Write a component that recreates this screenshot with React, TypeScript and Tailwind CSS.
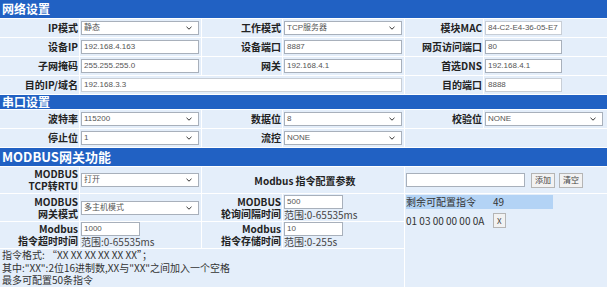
import React from "react";

const cell = "bg-[#e4eefa] flex items-center";
const label =
  "bg-[#e4eefa] flex items-center justify-end text-right font-bold text-[10px] leading-[12px] text-[#222] pr-px whitespace-nowrap";
const field =
  "h-[14px] border border-[#a8b0bb] bg-white text-[8px] leading-[12px] text-[#555] px-[2px] font-['Liberation_Sans','Noto_Sans_CJK_SC',sans-serif] flex items-center whitespace-nowrap overflow-hidden";

const Input = ({ value, w = "w-[118px]", disabled }: { value: string; w?: string; disabled?: boolean }) => (
  <div
    className={`${field} ${w} ${disabled ? "bg-[#eef1f5] border-[#c8ced6] text-[#9a9a9a]" : ""}`}
  >
    {value}
  </div>
);

const Select = ({ value, w = "w-[118px]" }: { value: string; w?: string }) => (
  <div className={`${field} ${w} justify-between`}>
    <span>{value}</span>
    <svg width="6" height="4" viewBox="0 0 6 4" className="mr-[4px]">
      <path d="M0.5 0.8 L3 3.2 L5.5 0.8" fill="none" stroke="#333" strokeWidth="1" />
    </svg>
  </div>
);

const Header = ({ title, h, size }: { title: string; h: string; size: string }) => (
  <div className={`bg-[#2161c3] text-white font-bold ${size} ${h} flex items-center pl-[2px]`}>{title}</div>
);

const Btn = ({ text }: { text: string }) => (
  <div className="h-[15px] px-[3px] border border-[#b5b5b5] bg-[#f2f2f2] text-[8px] text-[#444] flex items-center">
    {text}
  </div>
);

export default function App() {
  const cols = "grid grid-cols-[79px_121px_80px_121px_78px_123px] gap-px bg-white";
  return (
    <div className="w-[607px] h-[287px] overflow-hidden bg-white font-['Noto_Sans_CJK_SC','Noto_Sans',sans-serif] text-[#222]">
      <Header title="网络设置" h="h-[18px]" size="text-[12px]" />
      <div className={`${cols} auto-rows-[18px] pt-px`}>
        <div className={label}>IP模式</div>
        <div className={`${cell} pl-px`}><Select value="静态" /></div>
        <div className={label}>工作模式</div>
        <div className={`${cell} pl-px`}><Select value="TCP服务器" /></div>
        <div className={label}>模块MAC</div>
        <div className={`${cell} pl-px`}><Input value="84-C2-E4-36-05-E7" w="w-[77px]" disabled /></div>

        <div className={label}>设备IP</div>
        <div className={`${cell} pl-px`}><Input value="192.168.4.163" /></div>
        <div className={label}>设备端口</div>
        <div className={`${cell} pl-px`}><Input value="8887" /></div>
        <div className={label}>网页访问端口</div>
        <div className={`${cell} pl-px`}><Input value="80" w="w-[77px]" /></div>

        <div className={label}>子网掩码</div>
        <div className={`${cell} pl-px`}><Input value="255.255.255.0" /></div>
        <div className={label}>网关</div>
        <div className={`${cell} pl-px`}><Input value="192.168.4.1" /></div>
        <div className={label}>首选DNS</div>
        <div className={`${cell} pl-px`}><Input value="192.168.4.1" w="w-[77px]" /></div>

        <div className={label}>目的IP/域名</div>
        <div className={`${cell} pl-px col-span-3`}><Input value="192.168.3.3" w="w-[321px]" disabled /></div>
        <div className={label}>目的端口</div>
        <div className={`${cell} pl-px`}><Input value="8888" w="w-[77px]" disabled /></div>
      </div>

      <div className="pt-px">
        <Header title="串口设置" h="h-[14px]" size="text-[12px]" />
      </div>
      <div className={`${cols} auto-rows-[18px] pt-px`}>
        <div className={label}>波特率</div>
        <div className={`${cell} pl-px`}><Select value="115200" /></div>
        <div className={label}>数据位</div>
        <div className={`${cell} pl-px`}><Select value="8" /></div>
        <div className={label}>校验位</div>
        <div className={`${cell} pl-px`}><Select value="NONE" /></div>

        <div className={label}>停止位</div>
        <div className={`${cell} pl-px`}><Select value="1" /></div>
        <div className={label}>流控</div>
        <div className={`${cell} pl-px`}><Select value="NONE" /></div>
        <div className={`${cell} col-span-2`} />
      </div>

      <div className="pt-px">
        <Header title="MODBUS网关功能" h="h-[18px]" size="text-[13px]" />
      </div>
      <div className={`${cols} grid-rows-[26px_27px_26px_46px] pt-px`}>
        <div className={label}>
          <span>MODBUS<br />TCP转RTU</span>
        </div>
        <div className={`${cell} pl-px`}><Select value="打开" /></div>
        <div className={`${cell} col-span-2 justify-center font-bold text-[10px] pl-[4px]`}>Modbus 指令配置参数</div>
        <div className={`${cell} col-span-2 pl-px gap-[6px]`}>
          <div className={`${field} w-[119px]`} />
          <div className="flex gap-[4px]">
            <Btn text="添加" />
            <Btn text="清空" />
          </div>
        </div>

        <div className={label}>
          <span>MODBUS<br />网关模式</span>
        </div>
        <div className={`${cell} pl-px`}><Select value="多主机模式" /></div>
        <div className={label}>
          <span>MODBUS<br />轮询间隔时间</span>
        </div>
        <div className={`${cell} pl-px flex-col items-start justify-center`}>
          <Input value="500" w="w-[59px]" />
          <span className="text-[10px] leading-[12px] text-[#444]">范围:0-65535ms</span>
        </div>
        <div className="bg-[#e4eefa] col-span-2 row-span-3 pl-px pt-px text-[10px] leading-[14px] text-[#333]">
          <div className="w-[147px] bg-[#b3d3f5] flex">
            <span className="w-[87px]">剩余可配置指令</span>
            <span>49</span>
          </div>
          <div className="flex items-center mt-[4px] gap-[2px]">
            <span className="w-[85px]">01 03 00 00 00 0A</span>
            <Btn text="X" />
          </div>
        </div>

        <div className={label}>
          <span>Modbus<br />指令超时时间</span>
        </div>
        <div className={`${cell} pl-px flex-col items-start justify-center`}>
          <Input value="1000" w="w-[59px]" />
          <span className="text-[10px] leading-[12px] text-[#444]">范围:0-65535ms</span>
        </div>
        <div className={label}>
          <span>Modbus<br />指令存储时间</span>
        </div>
        <div className={`${cell} pl-px flex-col items-start justify-center`}>
          <Input value="10" w="w-[59px]" />
          <span className="text-[10px] leading-[12px] text-[#444]">范围:0-255s</span>
        </div>

        <div className="bg-[#e4eefa] col-span-4 pl-[2px] text-[10px] leading-[12.5px] text-[#333]">
          <div>指令格式: “XX XX XX XX XX XX”；</div>
          <div>其中:"XX":2位16进制数,XX与"XX"之间加入一个空格</div>
          <div>最多可配置50条指令</div>
        </div>
      </div>
    </div>
  );
}
